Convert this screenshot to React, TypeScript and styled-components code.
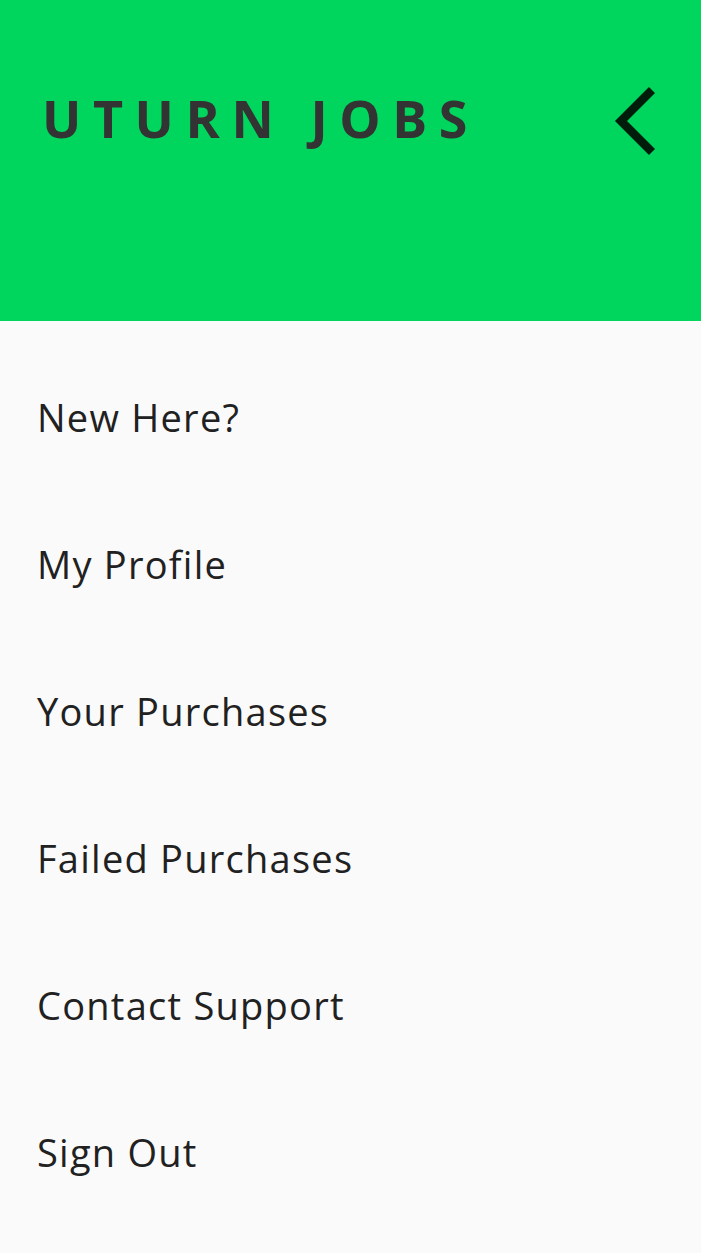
import React from "react";
import styled, { createGlobalStyle } from "styled-components";

const Global = createGlobalStyle`
  html, body { margin: 0; padding: 0; background: #fafafa; }
  * { box-sizing: border-box; }
`;

const Drawer = styled.div`
  width: 701px;
  min-height: 1253px;
  background: #fafafa;
  font-family: "Open Sans", "Liberation Sans", sans-serif;
`;

const Header = styled.header`
  height: 321px;
  background: #00d55e;
  display: flex;
  align-items: flex-start;
  justify-content: space-between;
  padding: 83px 42px 0 42px;
`;

const Title = styled.h1`
  margin: 0;
  font-size: 52px;
  line-height: 70px;
  font-weight: 700;
  letter-spacing: 11.6px;
  color: #333333;
`;

const BackButton = styled.button`
  border: 0;
  background: none;
  padding: 0;
  margin-top: 3px;
  margin-right: -2px;
  width: 48px;
  height: 76px;
  display: flex;
  align-items: center;
  justify-content: center;
  cursor: pointer;
`;

const Menu = styled.nav`
  display: flex;
  flex-direction: column;
  padding-top: 22px;
`;

const Item = styled.a`
  height: 147px;
  display: flex;
  align-items: center;
  padding-left: 37px;
  font-size: 38px;
  letter-spacing: 1.25px;
  color: #212121;
  text-decoration: none;
`;

const items = [
  "New Here?",
  "My Profile",
  "Your Purchases",
  "Failed Purchases",
  "Contact Support",
  "Sign Out",
];

export default function App() {
  return (
    <Drawer>
      <Global />
      <Header>
        <Title>UTURN JOBS</Title>
        <BackButton aria-label="Close menu">
          <svg width="48" height="76" viewBox="0 0 48 76">
            <polyline
              points="39,4 8,35 39,66"
              fill="none"
              stroke="#001d0c"
              strokeWidth="8.5"
            />
          </svg>
        </BackButton>
      </Header>
      <Menu>
        {items.map((t) => (
          <Item key={t} href="#">
            {t}
          </Item>
        ))}
      </Menu>
    </Drawer>
  );
}
